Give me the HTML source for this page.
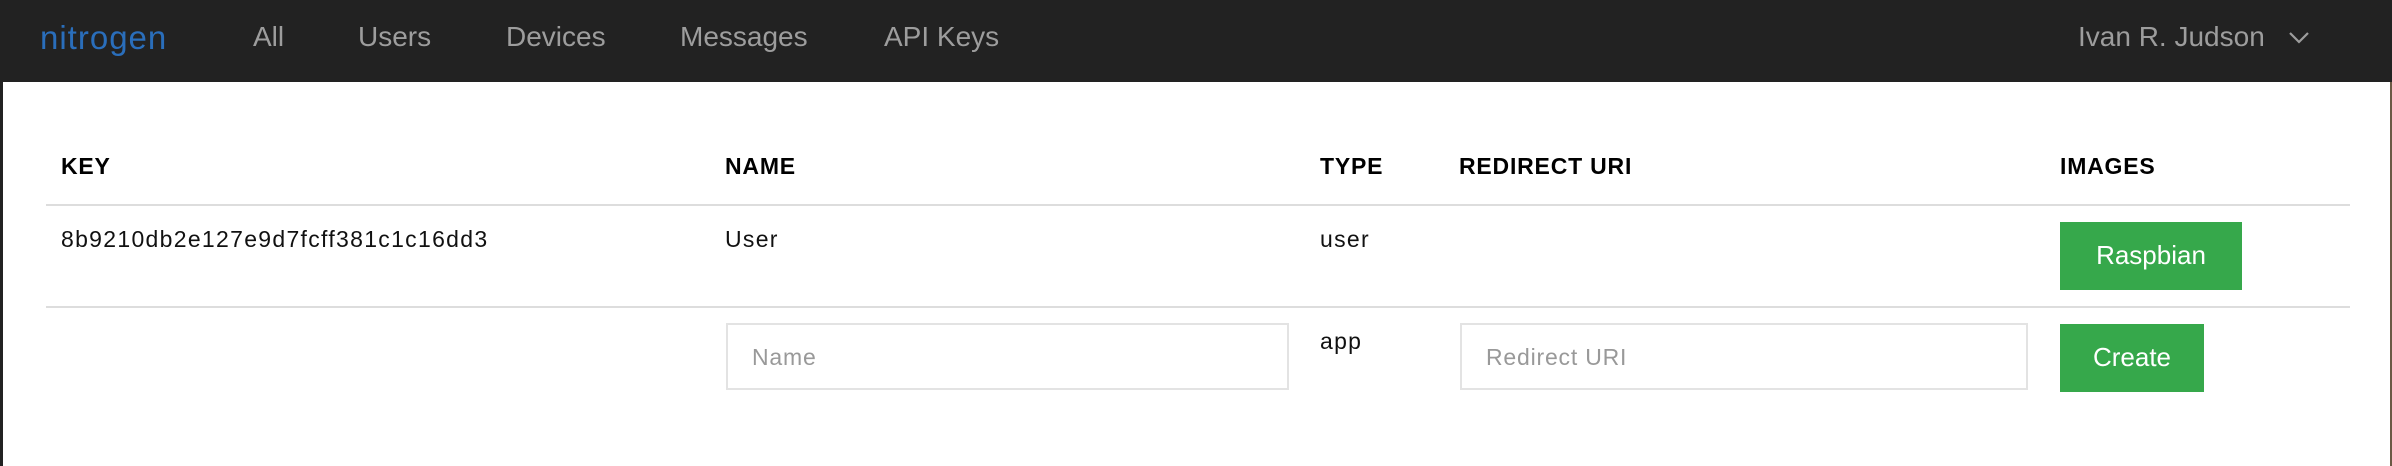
<!DOCTYPE html>
<html><head><meta charset="utf-8"><style>
*{margin:0;padding:0;box-sizing:border-box}
body{width:2392px;height:466px;background:#fff;font-family:"Liberation Sans",sans-serif;position:relative;overflow:hidden}
.nav{position:absolute;left:0;top:0;width:2392px;height:82px;background:#222}
.nav span{position:absolute;top:21px;font-size:28px;color:#9d9d9d}
.brand{color:#2a6ebb!important;font-size:33px!important;top:19px!important;letter-spacing:1px}
.t{position:absolute;font-size:23px;color:#111;letter-spacing:1.3px}
.h{font-weight:bold;font-size:23px;color:#000;letter-spacing:0.8px}
.line{position:absolute;left:46px;width:2304px;height:2px;background:#ddd}
.inp{position:absolute;border:2px solid #e3e3e3;height:67px;top:323px}
.inp span{position:absolute;left:24px;top:19px;font-size:23px;color:#999;letter-spacing:0.8px}
.btn{position:absolute;background:#36a84b;color:#fff;font-size:26px;left:2060px;height:68px;text-align:center;line-height:66px}
</style></head><body>
<div style="position:absolute;left:0;top:0;width:3px;height:466px;background:#222"></div>
<div class="nav">
<span class="brand" style="left:40px">nitrogen</span>
<span style="left:253px">All</span>
<span style="left:358px">Users</span>
<span style="left:506px">Devices</span>
<span style="left:680px">Messages</span>
<span style="left:884px">API Keys</span>
<span style="left:2078px">Ivan R. Judson</span>
<svg style="position:absolute;left:2288px;top:30px" width="22" height="16"><path d="M2 3 L11 12 L20 3" stroke="#9d9d9d" stroke-width="2.2" fill="none"/></svg>
</div>
<div class="t h" style="left:61px;top:153px">KEY</div>
<div class="t h" style="left:725px;top:153px">NAME</div>
<div class="t h" style="left:1320px;top:153px">TYPE</div>
<div class="t h" style="left:1459px;top:153px">REDIRECT URI</div>
<div class="t h" style="left:2060px;top:153px">IMAGES</div>
<div class="line" style="top:204px"></div>
<div class="t" style="left:61px;top:226px">8b9210db2e127e9d7fcff381c1c16dd3</div>
<div class="t" style="left:725px;top:226px">User</div>
<div class="t" style="left:1320px;top:226px">user</div>
<div class="btn" style="top:222px;width:182px">Raspbian</div>
<div class="line" style="top:306px"></div>
<div class="inp" style="left:726px;width:563px"><span>Name</span></div>
<div class="t" style="left:1320px;top:328px">app</div>
<div class="inp" style="left:1460px;width:568px"><span>Redirect URI</span></div>
<div class="btn" style="top:324px;width:144px">Create</div>
<div style="position:absolute;right:0;top:82px;width:2px;height:384px;background:#6b5a45"></div>
</body></html>
